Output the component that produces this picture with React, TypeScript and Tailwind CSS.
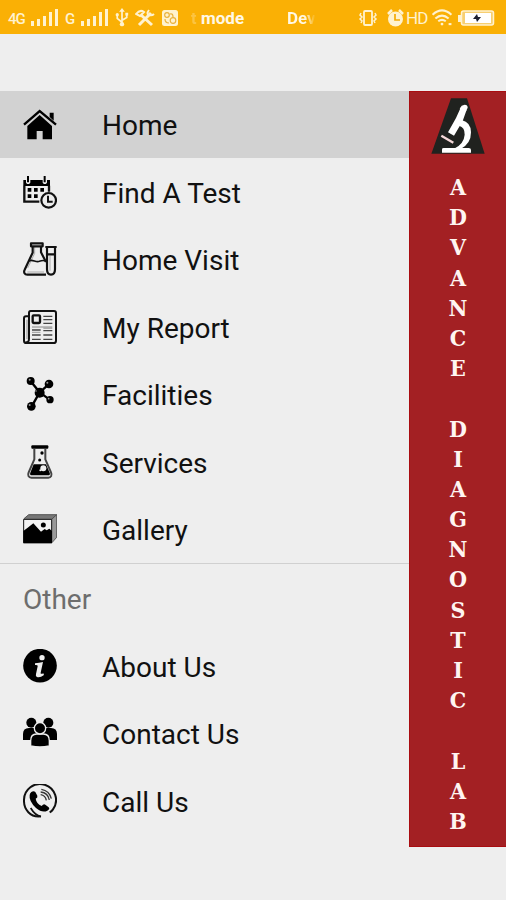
import type { ReactNode } from "react";

function Icon({ children }: { children: ReactNode }) {
  return (
    <svg viewBox="0 0 102 102" className="h-[34px] w-[34px] shrink-0" fill="#000" stroke="none">
      {children}
    </svg>
  );
}

const HomeIcon = () => (
  <Icon>
    <path d="M80 17h12v24l-12-11z" />
    <path d="M3 53 50 12l49 41" fill="none" stroke="#000" strokeWidth="7" />
    <path d="M13 57 50 24l37 33v40H59V72H41v25H13z" />
  </Icon>
);

const CalendarIcon = () => (
  <Icon>
    <path d="M1 15h8v7c0 7 13 7 13 0v-7h37v7c0 7 13 7 13 0v-7h9v18H1z" />
    <path d="M12 3h6v19h-6zM62 3h6v19h-6z" />
    <path d="M4 32v48h45M78 32v18" fill="none" stroke="#111" strokeWidth="7" />
    <path d="M14 39h11v11H14zM33 39h11v11H33zM52 39h11v11H52zM14 58h11v11H14zM33 58h11v11H33z" />
    <circle cx="77" cy="76" r="22" fill="none" stroke="#111" strokeWidth="6.500" />
    <path d="M75 62v18h14" fill="none" stroke="#111" strokeWidth="6" />
  </Icon>
);

const LabIcon = () => (
  <Icon>
    <path d="M35 14v20L14 78M13 90h50M81 42v44" fill="none" stroke="#aaa" strokeWidth="3" />
    <g fill="none" stroke="#111" strokeWidth="6.500" strokeLinejoin="round">
      <path d="M24 4h35v9H24zM29 13v19L5 83c-4 8 0 15 8 15h56M54 13v18l15 29" />
      <path d="M17 57c12-7 20 5 32 1 8-3 14-4 20 0" strokeWidth="5" />
      <path d="M67 15h34M72 16v66c0 10 4 16 12 16s12-6 12-16V16M73 37h22" />
    </g>
  </Icon>
);

const ReportIcon = () => (
  <Icon>
    <g fill="none" stroke="#111" strokeWidth="6">
      <path d="M18 19H9q-6 0-6 6v67q0 7 7 7h82q7 0 7-7V9q0-6-6-6H23q-5 0-5 6v77q0 12-10 11" />
      <rect x="29" y="16" width="22" height="23" rx="3" strokeWidth="7" />
    </g>
    <path d="M61 19h27M61 29h27M61 40h27M27 60h26M27 75h26M61 62h27M61 75h27M27 88h26M61 88h27" stroke="#444" strokeWidth="4" />
    <path d="M27 51h61M27 67h25M61 55h27M12 29v58" stroke="#aaa" strokeWidth="4" />
  </Icon>
);

const MoleculeIcon = () => (
  <Icon>
    <path d="M23 13 50 46 77 22M50 46 80 68M50 46 26 88" fill="none" stroke="#000" strokeWidth="7" />
    <circle cx="50" cy="47" r="15" />
    <circle cx="23" cy="12" r="12" />
    <circle cx="78" cy="21" r="13" />
    <circle cx="81" cy="68" r="11" />
    <circle cx="25" cy="88" r="13" />
    <g fill="#999">
      <circle cx="20" cy="8" r="3" />
      <circle cx="73" cy="17" r="3" />
      <circle cx="77" cy="65" r="2.500" />
      <circle cx="20" cy="84" r="3" />
      <circle cx="39" cy="42" r="2.500" />
    </g>
  </Icon>
);

const FlaskIcon = () => (
  <Icon>
    <rect x="25" y="1" width="51" height="10" rx="3" />
    <path d="M34 12v31L17 82c-4 9 0 16 8 16h51c8 0 12-7 8-16L67 43V12" fill="none" stroke="#444" strokeWidth="6" />
    <path d="M32 58h37l11 25c2 5 0 8-5 8H27c-5 0-7-3-5-8z" />
    <circle cx="61" cy="70" r="9" fill="#eee" />
    <circle cx="52" cy="76" r="3" fill="#eee" />
    <circle cx="57" cy="24" r="5" />
    <circle cx="50" cy="45" r="4.500" />
  </Icon>
);

const GalleryIcon = () => (
  <Icon>
    <path d="M1 22 17 8h84v68L86 92z" fill="#999" />
    <path d="M1 22 17 8h84L87 22z" fill="#777" />
    <path d="M3 20 17 8h84v68L87 92M87 21 101 8" fill="none" stroke="#444" strokeWidth="2.500" />
    <path d="M2 22h84v70H2z" fill="#f3f3f3" stroke="#111" strokeWidth="3" />
    <path d="M1 57 14 47l17-13 23 25 11-8 6 4 8-5 8 7v37H1z" />
    <circle cx="61" cy="39" r="7.500" />
  </Icon>
);

const InfoIcon = () => (
  <Icon>
    <circle cx="51" cy="50" r="50.500" />
    <circle cx="57" cy="26" r="8" fill="#eee" />
    <path d="M36 43q13-2 24-4L53 71q-1 6 8 2l2 5q-12 9-21 6-5-2-3-9l5-23q1-5-8-4z" fill="#eee" />
  </Icon>
);

const PeopleIcon = () => (
  <Icon>
    <circle cx="25" cy="20" r="15" />
    <circle cx="76" cy="20" r="15" />
    <path d="M0 70V54q0-18 18-18h14q12 0 15 18v18H0zM102 70V54q0-18-18-18H70q-12 0-15 18v18h47z" />
    <g stroke="#eee" strokeWidth="4">
      <path d="M23 90V74q0-20 18-20h20q18 0 18 20v16q-28 6-56 0z" />
      <circle cx="51" cy="37" r="17" />
    </g>
  </Icon>
);

const CallIcon = () => (
  <Icon>
    <path d="M53 97C22 101 2 76 3 49A48 48 0 1 1 90 76q-4 6-10 9" fill="none" stroke="#111" strokeWidth="6" />
    <path d="M23 72Q36 94 54 98" fill="none" stroke="#111" strokeWidth="5" />
    <path d="M25 24q7-5 12 0l6 11q2 6-5 9 2 14 18 22 6-8 11-4l10 8q5 6-4 10-15 8-34-8-22-21-19-39 1-6 5-9z" />
    <path d="M53 32q14 2 17 17M53 24q22 2 26 24M55 16q24 4 30 28" fill="none" stroke="#333" strokeWidth="4" />
  </Icon>
);

const mainItems = [
  { label: "Home", icon: <HomeIcon />, active: true },
  { label: "Find A Test", icon: <CalendarIcon /> },
  { label: "Home Visit", icon: <LabIcon /> },
  { label: "My Report", icon: <ReportIcon /> },
  { label: "Facilities", icon: <MoleculeIcon /> },
  { label: "Services", icon: <FlaskIcon /> },
  { label: "Gallery", icon: <GalleryIcon /> },
];

const otherItems = [
  { label: "About Us", icon: <InfoIcon /> },
  { label: "Contact Us", icon: <PeopleIcon /> },
  { label: "Call Us", icon: <CallIcon /> },
];

function Row({ label, icon, active }: { label: string; icon: ReactNode; active?: boolean }) {
  return (
    <li className={`flex h-[67.5px] items-center gap-[45px] pl-[23px] ${active ? "bg-[#d2d2d2]" : ""}`}>
      {icon}
      <span className="pt-1 text-[28px] leading-8 whitespace-nowrap text-[#111]">{label}</span>
    </li>
  );
}

function Signal() {
  return (
    <svg viewBox="0 0 27 17" className="h-[17px] w-[27px]" fill="#fff2cf">
      <path d="M0 12h3v5H0zM6 10h3v7H6zM12 7h3v10h-3zM18 3h3v14h-3zM24 0h3v17h-3z" />
    </svg>
  );
}

function StatusBar() {
  return (
    <header className="flex h-[34px] items-center bg-[#fab005] pt-px pl-2 text-[#fff2cf]">
      <span className="w-[23px] pt-1 text-[15px] font-medium tracking-[-1px]">4G</span>
      <Signal />
      <span className="ml-[7px] w-4 pt-1 text-[15px] font-medium">G</span>
      <Signal />
      <svg viewBox="0 0 14 20" className="ml-[7px] h-[19px] w-[14px]" fill="none" stroke="#fff2cf" strokeWidth="1.800">
        <path d="M7 3v14M2 8v3l5 4M12 7v3l-5 3" />
        <path d="m7 0 3 4H4zM10.500 5h3v3h-3z" fill="#fff2cf" stroke="none" />
        <circle cx="2" cy="7" r="1.700" fill="#fff2cf" stroke="none" />
        <circle cx="7" cy="17" r="2.300" fill="#fff2cf" stroke="none" />
      </svg>
      <svg viewBox="0 0 20 18" className="ml-[6px] h-[18px] w-5" fill="none" stroke="#fff2cf" strokeWidth="3">
        <path d="m4 16 12-12M6 6l11 10" />
        <path d="M1 5q4-5 8-2L5 7zM14 1q-3 4 0 5t5-1" strokeWidth="2" />
      </svg>
      <svg viewBox="0 0 16 16" className="ml-[7px] h-4 w-4">
        <rect width="16" height="16" rx="2.500" fill="#fff2cf" />
        <g fill="none" stroke="#e9b13c" strokeWidth="1.200">
          <circle cx="5" cy="5" r="2.300" />
          <circle cx="11" cy="10.500" r="2.800" />
          <path d="M8 4q3-1 3 3M3 9q0 4 4 4" />
        </g>
      </svg>
      <span className="ml-[13px] w-[10px] pt-[2px] text-base font-bold opacity-30">t</span>
      <span className="w-[86px] pt-[3px] text-[17px] font-bold text-[#fff8e6]">mode</span>
      <span className="w-[71px] bg-linear-to-r from-[#fff8e6] from-[25%] to-transparent to-[40%] bg-clip-text pt-[3px] text-[17px] font-bold text-transparent">
        Dev
      </span>
      <svg viewBox="0 0 20 18" className="h-[18px] w-5" fill="none" stroke="#fff2cf" strokeWidth="1.800">
        <rect x="6" y="2" width="8" height="14" rx="1" />
        <path d="m3 4-1 2 2 2-2 2 2 2-1 2M17 4l1 2-2 2 2 2-2 2 1 2" strokeWidth="1.500" />
      </svg>
      <svg viewBox="0 0 17 18" className="ml-[9px] h-[18px] w-[17px]" fill="#fff2cf">
        <circle cx="8.500" cy="10" r="7.500" />
        <path d="M1 5l4-4M12 1l4 4" stroke="#fff2cf" strokeWidth="2.500" />
        <path d="M8 5v6h5" fill="none" stroke="#f5ab05" strokeWidth="1.700" />
      </svg>
      <span className="ml-[2px] w-[25px] pt-[2px] text-[17px] tracking-[-1px]">HD</span>
      <svg viewBox="0 0 22 18" className="h-[17px] w-[22px]" fill="none" stroke="#fff2cf" strokeWidth="2.200">
        <path d="M1 6q10-9 20 0M4 10q7-6 14 0M7 13q4-3 8 0" />
        <circle cx="11" cy="16" r="1.500" fill="#fff2cf" stroke="none" />
        <path d="M18 16h3" />
      </svg>
      <svg viewBox="0 0 38 16" className="ml-1 h-4 w-[38px]">
        <path d="M1 5h4v7H1z" fill="#fff2cf" />
        <rect x="4.500" y="1" width="32" height="14" rx="2" fill="#f7cf71" stroke="#fff2cf" strokeWidth="1.500" />
        <rect x="8" y="3" width="26" height="10" fill="#fff" />
        <path d="m20 4 1 3h3l-4 5-1-3h-3z" fill="#1d2030" />
      </svg>
    </header>
  );
}

function Microscope() {
  return (
    <svg viewBox="0 0 162 168" className="-ml-px h-14 w-[54px] shrink-0">
      <path d="M60 1h48l53 166H1z" fill="#20221f" />
      <path d="m90 27 17 8-12 34-26 44-18-10 24-43z" fill="#fff" />
      <path d="M92 66q28 7 28 37 0 34-30 49H69q30-14 32-42 1-22-17-27z" fill="#fff" />
      <path d="M101 20q9 0 9 9l-6 12-18-8 6-10z" fill="#fff" />
      <path d="m31 113 36 21" stroke="#f5d9d9" strokeWidth="7" />
      <path d="M33 164v-10q0-4 5-4h75q7 0 7 6v8z" fill="#fff" />
    </svg>
  );
}

function Banner() {
  return (
    <aside className="flex h-[756px] w-[97px] flex-col items-center border border-r-0 border-[#a90c10] bg-[#a32023] pt-[6px]">
      <Microscope />
      <div className="mt-[18px] flex flex-col items-center font-['DejaVu_Serif_Condensed','DejaVu_Serif',serif] text-[23px] font-bold text-[#fff5f1]">
        {"ADVANCE DIAGNOSTIC LAB".split("").map((letter, i) => (
          <span key={i} className="h-[30.2px] leading-[30px]">
            {letter}
          </span>
        ))}
      </div>
    </aside>
  );
}

export default function App() {
  return (
    <div className="h-[900px] w-[506px] overflow-hidden bg-[#eee] font-[Roboto,sans-serif]">
      <StatusBar />
      <main className="flex pt-[57px]">
        <nav className="-mt-[0.5px] w-[409px]">
          <ul>
            {mainItems.map((item) => (
              <Row key={item.label} {...item} />
            ))}
          </ul>
          <div className="h-[69px] border-t border-[#d0d0d0] pt-5 pl-[23px] text-[28px] leading-8 text-[#6d6d6d]">
            Other
          </div>
          <ul>
            {otherItems.map((item) => (
              <Row key={item.label} {...item} />
            ))}
          </ul>
        </nav>
        <Banner />
      </main>
    </div>
  );
}
